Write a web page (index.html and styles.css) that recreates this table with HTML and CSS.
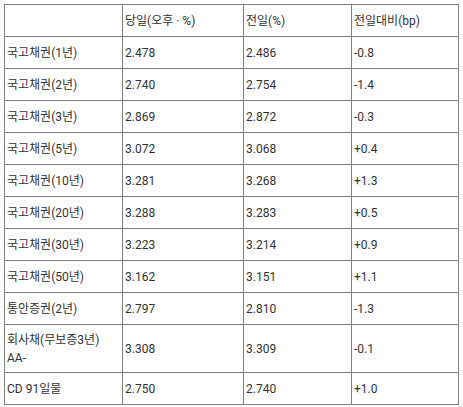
FILE: index.html
```html
<!DOCTYPE html>
<html lang="ko">
<head>
<meta charset="utf-8">
<link rel="stylesheet" href="styles.css">
</head>
<body>
<table class="rates">
  <colgroup>
    <col class="c-name">
    <col class="c-today">
    <col class="c-prev">
    <col class="c-diff">
  </colgroup>
  <thead>
    <tr><th></th><th>당일(오후 · %)</th><th>전일(%)</th><th>전일대비(bp)</th></tr>
  </thead>
  <tbody>
    <tr><td>국고채권(1년)</td><td>2.478</td><td>2.486</td><td>-0.8</td></tr>
    <tr><td>국고채권(2년)</td><td>2.740</td><td>2.754</td><td>-1.4</td></tr>
    <tr><td>국고채권(3년)</td><td>2.869</td><td>2.872</td><td>-0.3</td></tr>
    <tr><td>국고채권(5년)</td><td>3.072</td><td>3.068</td><td>+0.4</td></tr>
    <tr><td>국고채권(10년)</td><td>3.281</td><td>3.268</td><td>+1.3</td></tr>
    <tr><td>국고채권(20년)</td><td>3.288</td><td>3.283</td><td>+0.5</td></tr>
    <tr><td>국고채권(30년)</td><td>3.223</td><td>3.214</td><td>+0.9</td></tr>
    <tr><td>국고채권(50년)</td><td>3.162</td><td>3.151</td><td>+1.1</td></tr>
    <tr><td>통안증권(2년)</td><td>2.797</td><td>2.810</td><td>-1.3</td></tr>
    <tr class="tall"><td>회사채(무보증3년) AA-</td><td>3.308</td><td>3.309</td><td>-0.1</td></tr>
    <tr><td>CD 91일물</td><td>2.750</td><td>2.740</td><td>+1.0</td></tr>
  </tbody>
</table>
</body>
</html>
```
FILE: styles.css
```css
html, body {
  margin: 0;
  padding: 0;
  background: #ffffff;
}
body {
  padding: 4px;
  font-family: Roboto, "Noto Sans CJK KR", sans-serif;
  font-size: 12px;
  color: #333333;
}
.rates {
  border-collapse: collapse;
  table-layout: fixed;
  width: 454px;
}
.c-name { width: 118px; }
.c-today { width: 121px; }
.c-prev { width: 108px; }
.c-diff { width: 107px; }
.rates th,
.rates td {
  border: 1px solid #808080;
  padding: 0 2px;
  height: 31px;
  line-height: 18px;
  text-align: left;
  font-weight: normal;
  vertical-align: middle;
}
.rates tr.tall td {
  height: 47px;
}
```
